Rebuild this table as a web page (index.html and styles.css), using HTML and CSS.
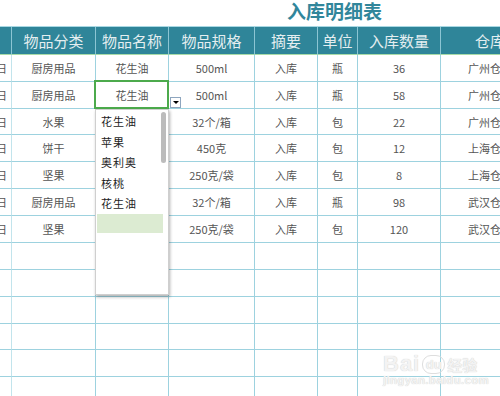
FILE: index.html
```html
<!DOCTYPE html>
<html lang="zh">
<head>
<meta charset="utf-8">
<link rel="stylesheet" href="styles.css">
</head>
<body>
<div class="page">
  <div class="title-row"><span class="title">入库明细表</span></div>
  <div class="sheet">
    <div class="hd"></div><div class="hd">物品分类</div><div class="hd">物品名称</div><div class="hd">物品规格</div><div class="hd">摘要</div><div class="hd">单位</div><div class="hd">入库数量</div><div class="hd">仓库</div>

    <div class="c a">日</div><div class="c">厨房用品</div><div class="c">花生油</div><div class="c">500ml</div><div class="c">入库</div><div class="c">瓶</div><div class="c">36</div><div class="c">广州仓库</div>
    <div class="c a">日</div><div class="c">厨房用品</div><div class="c sel">花生油</div><div class="c">500ml</div><div class="c">入库</div><div class="c">瓶</div><div class="c">58</div><div class="c">广州仓库</div>
    <div class="c a">日</div><div class="c">水果</div><div class="c"></div><div class="c">32个/箱</div><div class="c">入库</div><div class="c">包</div><div class="c">22</div><div class="c">广州仓库</div>
    <div class="c a">日</div><div class="c">饼干</div><div class="c"></div><div class="c">450克</div><div class="c">入库</div><div class="c">包</div><div class="c">12</div><div class="c">上海仓库</div>
    <div class="c a">日</div><div class="c">坚果</div><div class="c"></div><div class="c">250克/袋</div><div class="c">入库</div><div class="c">包</div><div class="c">8</div><div class="c">上海仓库</div>
    <div class="c a">日</div><div class="c">厨房用品</div><div class="c"></div><div class="c">32个/箱</div><div class="c">入库</div><div class="c">瓶</div><div class="c">98</div><div class="c">武汉仓库</div>
    <div class="c a">日</div><div class="c">坚果</div><div class="c"></div><div class="c">250克/袋</div><div class="c">入库</div><div class="c">包</div><div class="c">120</div><div class="c">武汉仓库</div>

    <div class="c a"></div><div class="c"></div><div class="c"></div><div class="c"></div><div class="c"></div><div class="c"></div><div class="c"></div><div class="c"></div>
    <div class="c a"></div><div class="c"></div><div class="c"></div><div class="c"></div><div class="c"></div><div class="c"></div><div class="c"></div><div class="c"></div>
    <div class="c a"></div><div class="c"></div><div class="c"></div><div class="c"></div><div class="c"></div><div class="c"></div><div class="c"></div><div class="c"></div>
    <div class="c a"></div><div class="c"></div><div class="c"></div><div class="c"></div><div class="c"></div><div class="c"></div><div class="c"></div><div class="c"></div>
    <div class="c a"></div><div class="c"></div><div class="c"></div><div class="c"></div><div class="c"></div><div class="c"></div><div class="c"></div><div class="c"></div>
    <div class="c a"></div><div class="c"></div><div class="c"></div><div class="c"></div><div class="c"></div><div class="c"></div><div class="c"></div><div class="c"></div>
  </div>

  <div class="drop-btn"><span class="tri"></span></div>
  <div class="dropdown">
    <div class="item">花生油</div>
    <div class="item">苹果</div>
    <div class="item">奥利奥</div>
    <div class="item">核桃</div>
    <div class="item">花生油</div>
    <div class="item hl"></div>
    <div class="thumb"></div>
  </div>

  <div class="watermark">
    <div class="wm-top"><span class="wm-bai">Bai</span><span class="wm-du">du</span><span class="wm-jy">经验</span></div>
    <div class="wm-url">jingyan.baidu.com</div>
  </div>
</div>
</body>
</html>
```

FILE: styles.css
```css
html, body {
  margin: 0;
  padding: 0;
  background: #ffffff;
  overflow: hidden;
}
.page {
  position: relative;
  width: 500px;
  height: 396px;
  overflow: hidden;
  font-family: "Noto Sans CJK SC", "Noto Sans", sans-serif;
}
.title-row {
  height: 26px;
  display: flex;
  align-items: flex-start;
  padding-left: 287px;
}
.title {
  font-size: 19px;
  font-weight: bold;
  color: #31869b;
  line-height: 22px;
}
.sheet {
  display: grid;
  width: 540px;
  grid-template-columns: 12px 84px 73px 86px 63px 40px 83px 99px;
  grid-template-rows: 28px 27px 27px 26px 27px 27px 27px 27px 27px 27px 27px 26px 27px 27px;
  border-top: 1px solid #a9d8e3;
}
.hd {
  background: #2f8599;
  color: #e4eef0;
  font-size: 15px;
  display: flex;
  align-items: center;
  justify-content: center;
  border-right: 1px solid #8cc5d3;
  border-bottom: 1px solid #a8dba8;
  line-height: 18px;
}
.c {
  display: flex;
  align-items: center;
  justify-content: center;
  font-size: 11px;
  color: #555555;
  border-right: 1px solid #9dd2df;
  border-bottom: 1px solid #9dd2df;
  line-height: 14px;
  white-space: nowrap;
  overflow: hidden;
}
.a {
  justify-content: flex-end;
  padding-right: 4px;
  border-right-color: #c2e4ec;
}
.sel {
  position: relative;
  overflow: visible;
  z-index: 1;
}
.sel::after {
  content: "";
  position: absolute;
  left: -2px;
  top: -2px;
  right: -1px;
  bottom: -1px;
  border: 2px solid #4caa4c;
}
.drop-btn {
  position: absolute;
  left: 170px;
  top: 97px;
  width: 9px;
  height: 9px;
  border: 1px solid #8ea6bf;
  background: #ffffff;
  display: flex;
  align-items: center;
  justify-content: center;
  z-index: 3;
}
.tri {
  width: 0;
  height: 0;
  border-left: 3px solid transparent;
  border-right: 3px solid transparent;
  border-top: 3px solid #000000;
}
.dropdown {
  position: absolute;
  left: 95px;
  top: 109px;
  width: 74px;
  height: 186px;
  background: #ffffff;
  border: 1px solid #cfcfcf;
  box-shadow: 1px 2px 3px rgba(0, 0, 0, 0.3);
  z-index: 2;
  padding-top: 1px;
  box-sizing: border-box;
}
.item {
  height: 20.5px;
  display: flex;
  align-items: center;
  padding-left: 4px;
  font-size: 11px;
  color: #1c1c1c;
  letter-spacing: 1px;
  width: 62px;
  margin-left: 1px;
}
.item.hl {
  background: #dcebd2;
  height: 19px;
}
.thumb {
  position: absolute;
  right: 2px;
  top: 2px;
  width: 5px;
  height: 51px;
  border-radius: 3px;
  background: #bcbcbc;
}
.watermark {
  position: absolute;
  left: 383px;
  top: 351px;
  color: #f3f3f3;
  text-shadow: 0 0 1px #c4c4c4;
}
.wm-top {
  display: flex;
  align-items: center;
  height: 26px;
  font-family: "Liberation Sans", sans-serif;
}
.wm-bai {
  font-size: 22px;
  font-weight: bold;
  letter-spacing: 1px;
}
.wm-du {
  font-size: 13px;
  font-weight: bold;
  margin-left: 2px;
  width: 21px;
  height: 17px;
  border-radius: 9px;
  border: 1px solid #dedede;
  display: flex;
  align-items: center;
  justify-content: center;
}
.wm-jy {
  font-size: 15px;
  font-family: "Noto Sans CJK SC", sans-serif;
  margin-left: 2px;
  font-weight: bold;
}
.wm-url {
  font-family: "Liberation Sans", sans-serif;
  font-size: 11.5px;
  font-weight: bold;
  letter-spacing: 0.3px;
  margin-top: -3px;
}
```
